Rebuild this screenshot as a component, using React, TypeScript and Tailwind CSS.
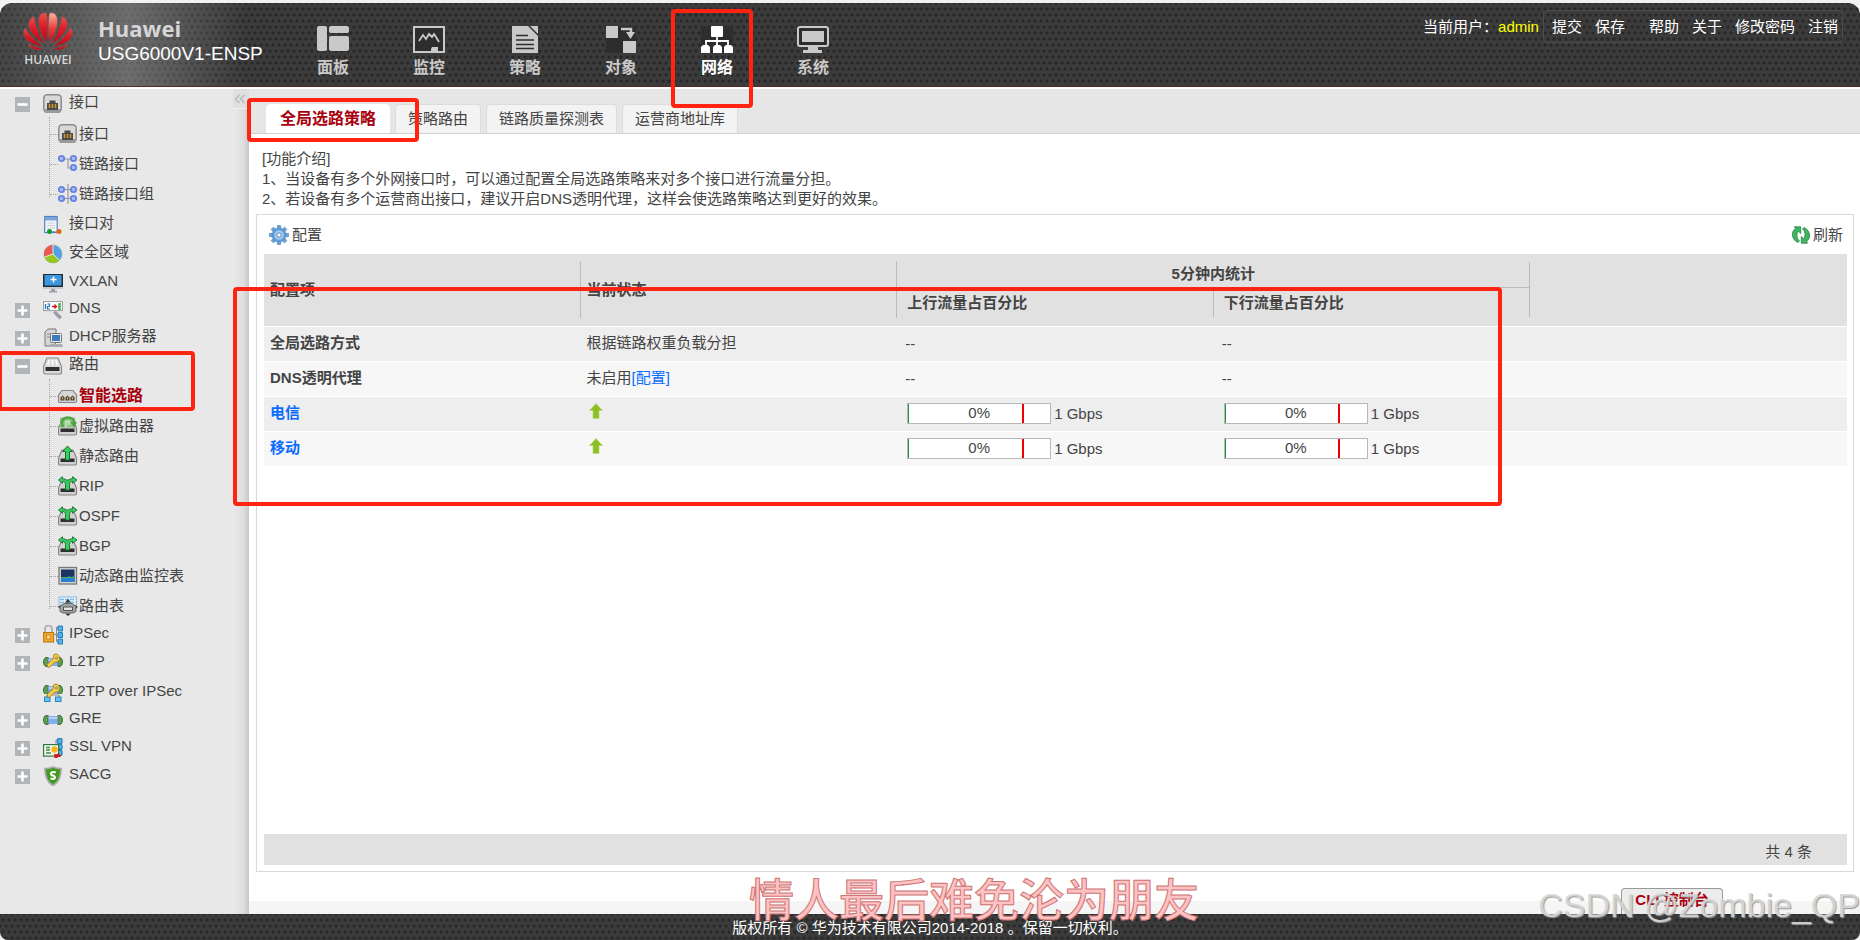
import type { ReactNode } from 'react'

type MenuItem = {
  label: string
  icon: ReactNode
  toggle?: 'open' | 'closed'
  active?: boolean
  children?: MenuItem[]
}

const svg = (children: ReactNode) => (
  <svg viewBox="0 0 20 20" className="w-5 h-5 shrink-0" aria-hidden="true">{children}</svg>
)

/* Sidebar icons */
const PortIcon = () => svg(
  <>
    <rect x="0.8" y="0.8" width="17.4" height="17.4" rx="3.5" fill="#d9d9d9" stroke="#8b8b8b" strokeWidth="1.5" />
    <path d="M1 15h17v1.500a2.500 2.500 0 0 1-2.500 2.500h-12A2.500 2.500 0 0 1 1 16.500z" fill="#9a9a9a" />
    <path d="M4 16V9h2.500V6.500h6V9H15v7z" fill="#4a4a4a" />
    <path d="M6.500 10v4M9.500 10v4M12.500 10v4" stroke="#d59a2b" strokeWidth="1.500" />
  </>
)

const LinkIcon = () => svg(
  <>
    <path d="M3 5h13M10 5v9h6" stroke="#999" strokeWidth="1.2" fill="none" />
    {[[3.500, 4.500], [15.500, 4.500], [15.500, 13.500]].map(([x, y]) => (
      <circle key={`${x}-${y}`} cx={x} cy={y} r="2.700" fill="#a9bcf5" stroke="#6683e0" strokeWidth="1.800" />
    ))}
  </>
)

const LinkGroupIcon = () => svg(
  <>
    <path d="M10 0v20M4 5.500h12M4 14.500h12" stroke="#999" strokeWidth="1.2" />
    {[[3.500, 5.500], [15.500, 5.500], [3.500, 14.500], [15.500, 14.500]].map(([x, y]) => (
      <circle key={`${x}-${y}`} cx={x} cy={y} r="2.700" fill="#a9bcf5" stroke="#6683e0" strokeWidth="1.800" />
    ))}
  </>
)

const PairIcon = () => svg(
  <>
    <rect x="1.700" y="1.500" width="12.500" height="16" fill="#f4f8fd" stroke="#5480c0" strokeWidth="1.200" />
    <path d="M2 2h12v3.500H2z" fill="#7da4dc" />
    <path d="M4 8h8M4 10.500h8M4 13h8" stroke="#c9cdd4" />
    <circle cx="6.500" cy="16.500" r="2.500" fill="#159a2a" />
    <circle cx="16" cy="16.500" r="2.500" fill="#e8650a" />
    <path d="M9.500 16.500h4" stroke="#5480c0" strokeDasharray="2 1" />
  </>
)

const ZoneIcon = () => svg(
  <>
    <circle cx="10" cy="10" r="9" fill="#4ea3e8" stroke="#999" strokeWidth="0.600" />
    <path d="M10 10V1a9 9 0 0 0-8.500 12z" fill="#ea5a4e" />
    <path d="M10 10l-8.500 3A9 9 0 0 0 16.500 16.300z" fill="#97c81e" />
    <path d="M10 1v9l6.500 6.300M10 10l-8.500 3" stroke="#fff" strokeWidth="0.800" fill="none" />
  </>
)

const VxlanIcon = () => svg(
  <>
    <rect x="0" y="1" width="20" height="13" fill="#1d2e3d" />
    <rect x="1.500" y="2" width="17" height="10.500" fill="#3d96dc" />
    <path d="M0 14h20v2H0z" fill="#c8ccd0" />
    <path d="M8 16h4v2h2v1.500H6V18h2z" fill="#9a9fa5" />
    <path d="M10.500 3.500v6M7.500 6.500h6" stroke="#fff" strokeWidth="1.500" />
  </>
)

const DnsIcon = () => svg(
  <>
    <rect x="0.600" y="1.600" width="18.800" height="9" fill="#fff" stroke="#999" />
    <path d="M2.500 4v5M4.500 4h2v2.500h-2V9h2.500" stroke="#1e78c8" fill="none" strokeWidth="1.200" />
    <path d="M9 6.500h4.500M11.500 4.500l2 2-2 2" stroke="#d11" strokeWidth="1.300" fill="none" />
    <path d="M18 4h-2v5h2M16 6.500h2" stroke="#2a9a2a" strokeWidth="1.300" fill="none" />
    <path d="M10 12l3-1 2 2 4 4-2.500 2.500-4-4z" fill="#9b9cae" />
  </>
)

const DhcpIcon = () => svg(
  <>
    <path d="M2 4l3-3h8v14l-3 3H2z" fill="#d4d6d8" stroke="#777" />
    <path d="M4 6h4M4 9h4" stroke="#888" />
    <rect x="7.500" y="5.500" width="11" height="9" rx="1" fill="#e8e8e8" stroke="#777" />
    <rect x="9" y="7" width="8" height="6" fill="#3e7dbd" />
    <path d="M7 16h12l1 3H6z" fill="#aaadb0" />
  </>
)

const RouterBase = () => (
  <>
    <path d="M4 4h11l3.500 8v5.500a1.500 1.500 0 0 1-1.500 1.500H2a1.500 1.500 0 0 1-1.500-1.500V12z" fill="#d2d2d2" stroke="#858585" strokeWidth="1.200" />
    <path d="M2.500 12.500h14v3.500h-14z" fill="#2f2f2f" />
  </>
)

const RouteIcon = () => svg(
  <>
    <path d="M4 2h11l3.500 8.500V16a2 2 0 0 1-2 2h-14a2 2 0 0 1-2-2v-5.500z" fill="#dcdcdc" stroke="#8a8a8a" strokeWidth="1.200" />
    <path d="M6 4L5 9M9.500 4v5M13 4l1 5" stroke="#fff" strokeWidth="1.500" />
    <path d="M2.500 11h14v4h-14z" fill="#2f2f2f" />
  </>
)

const SmartIcon = () => svg(
  <>
    <path d="M4 4.500h11L18.500 9v6a1.500 1.500 0 0 1-1.500 1.500H2A1.500 1.500 0 0 1 .5 15V9z" fill="#d6d6d6" stroke="#858585" strokeWidth="1.200" />
    {[4.500, 9.500, 14.500].map(x => (
      <g key={x}>
        <path d={`M${x - 2} 14.500v-3l2-2 2 2v3z`} fill="#4a4335" />
        <path d={`M${x} 11v2.500`} stroke="#d8b04a" strokeWidth="1.200" />
      </g>
    ))}
  </>
)

const VirtualIcon = () => svg(
  <>
    <RouterBase />
    <path d="M2 1.500h15v10H2z" fill="#8fc487" />
    <path d="M5 11C2 4 6 1.500 9.500 1.500S16 3 16.500 7" stroke="#4fa343" strokeWidth="2.600" fill="none" />
    <path d="M12.500 6h6.500l-3 5.500z" fill="#4fa343" />
    <path d="M8 11V5.500h3v3.500" stroke="#c8e8c2" strokeWidth="1.500" fill="none" />
  </>
)

const StaticIcon = () => svg(
  <>
    <RouterBase />
    <path d="M9.500 0l5 5.500h-3V14h-4V5.500h-3z" fill="#35cf5d" stroke="#1a6b30" strokeWidth="1" />
  </>
)

const DynamicIcon = () => svg(
  <>
    <RouterBase />
    <path d="M0.500 4L4.500 0.700v2c2 0 3.500.8 5 2 1.500-1.200 3-2 5-2v-2L19 4l-4.500 3.300v-2c-2 .2-3 1-3 3V14h-4V8.300c0-2-1-2.800-3-3v2z" fill="#35cf5d" stroke="#1a6b30" strokeWidth="0.900" />
  </>
)

const MonitorTableIcon = () => svg(
  <>
    <rect x="1" y="1.500" width="17.500" height="16.500" fill="#d5d5d5" stroke="#777" strokeWidth="1.300" />
    <rect x="3" y="3.500" width="13.500" height="12.500" fill="#1c3461" />
    <path d="M3 12l3-1 2 1 3-2 2 1 3.500-1V16H3z" fill="#2b7fd0" />
    <path d="M3 11.500h13.500" stroke="#46b04a" />
  </>
)

const RouteTableIcon = () => svg(
  <>
    <rect x="1" y="1" width="17.500" height="11" fill="#e8f4fb" stroke="#8abbe0" />
    <path d="M2 3.500h15.500M2 6.500h15.500" stroke="#7eb6de" strokeWidth="1.500" strokeDasharray="4 1" />
    <path d="M10 3l3 3.500H7zM10 20l3-2.500H7zM0 11l3.500-2.500v5zM20 11l-3.500-2.500v5z" fill="#333" />
    <path d="M6 7.500h8l4 3v5l-3 1.500H5l-3-1.500v-5z" fill="#a2a5a8" stroke="#666" />
    <rect x="5.500" y="11" width="9" height="3.500" fill="#e4e4e4" stroke="#555" />
  </>
)

const IpsecIcon = () => svg(
  <>
    <path d="M2 8V4a3.500 3.500 0 0 1 7 0v4" fill="none" stroke="#b4b4b4" strokeWidth="2" />
    <rect x="0.600" y="7.500" width="10" height="9.500" fill="#f2a92c" stroke="#b87510" />
    <rect x="3.500" y="10" width="4" height="4" fill="#fbd98a" stroke="#b87510" strokeWidth="0.700" />
    <path d="M11 9.500h2.500M16 2.500h-2.500v14H16" stroke="#888" fill="none" />
    {[1, 7.500, 14].map(y => (
      <rect key={y} x="15" y={y} width="4.500" height="5" rx="1" fill="#58b4e8" stroke="#1f7fc0" strokeWidth="1.200" />
    ))}
  </>
)

const Pipe = ({ y = 5 }: { y?: number }) => (
  <g transform={`translate(0 ${y})`}>
    <path d="M3 0.500C-0.300 1.500-0.300 8.500 3 9.500h2v-9z" fill="#57a24c" stroke="#2f6e2a" />
    <path d="M17 0.500c3.300 1 3.300 8 0 9h-2v-9z" fill="#57a24c" stroke="#2f6e2a" />
    <rect x="5" y="1" width="10" height="8" fill="#7fb2ec" />
    <path d="M5 3h10" stroke="#c3dcf8" strokeWidth="1.500" />
    <path d="M4.800 0v10M15.200 0v10" stroke="#777" strokeWidth="1.300" />
  </g>
)

const KeyShape = () => (
  <path d="M11 1.500a4 4 0 1 1 3 7.500l-2.500.3-5 5-2-.3-.5-2.500 6-5.500zM13.500 3.800a1.200 1.200 0 1 0 .1 0z" fill="#f6cf4a" stroke="#a87b13" strokeWidth="0.900" />
)

const L2tpIcon = () => svg(<><Pipe y={4} /><KeyShape /></>)

const L2tpIpsecIcon = () => svg(
  <>
    <Pipe y={2} />
    <rect x="0" y="11" width="20" height="8" fill="#e8e8e8" />
    <path d="M4 15v-3h12v3" stroke="#888" fill="none" />
    <rect x="1.500" y="14" width="5.500" height="4.500" fill="#6fc0ee" stroke="#1f86c8" />
    <rect x="12.500" y="14" width="5.500" height="4.500" fill="#6fc0ee" stroke="#1f86c8" />
    <KeyShape />
  </>
)

const GreIcon = () => svg(<Pipe />)

const SslIcon = () => svg(
  <>
    <path d="M16 2h-3v4" stroke="#888" fill="none" />
    {[0.700, 6.500, 12.500].map(y => (
      <rect key={y} x="14.500" y={y} width="4.500" height="4.800" rx="1" fill="#58b4e8" stroke="#1f7fc0" strokeWidth="1.200" />
    ))}
    <rect x="0.600" y="6.600" width="15" height="11.500" fill="#f4faf0" stroke="#2d7a3d" strokeWidth="1.200" />
    <path d="M3 9.500h4M3 12h4M3 15h5" stroke="#3f8a4c" strokeWidth="1.300" />
    <circle cx="11.500" cy="11.500" r="3.200" fill="#f8b51e" />
    <path d="M11 15.500l2 1 2.500-1.500v1.500h2v2.500h-3V20h-3z" fill="#d8161a" />
  </>
)

const SacgIcon = () => svg(
  <>
    <path d="M10 1c2.500 1.200 5 1.700 8 1.700 0 8-2 13.300-8 16.800C4 16 2 10.700 2 2.700c3 0 5.500-.5 8-1.700z" fill="#3f9a1e" stroke="#a9a9a9" strokeWidth="1.800" />
    <path d="M12.800 6.500c-5-1.500-6.500 2-3 3s3 4.500-2.300 3" stroke="#fff" strokeWidth="2" fill="none" />
  </>
)

const menu: MenuItem[] = [
  {
    label: '接口', icon: <PortIcon />, toggle: 'open',
    children: [
      { label: '接口', icon: <PortIcon /> },
      { label: '链路接口', icon: <LinkIcon /> },
      { label: '链路接口组', icon: <LinkGroupIcon /> },
    ],
  },
  { label: '接口对', icon: <PairIcon /> },
  { label: '安全区域', icon: <ZoneIcon /> },
  { label: 'VXLAN', icon: <VxlanIcon /> },
  { label: 'DNS', icon: <DnsIcon />, toggle: 'closed' },
  { label: 'DHCP服务器', icon: <DhcpIcon />, toggle: 'closed' },
  {
    label: '路由', icon: <RouteIcon />, toggle: 'open',
    children: [
      { label: '智能选路', icon: <SmartIcon />, active: true },
      { label: '虚拟路由器', icon: <VirtualIcon /> },
      { label: '静态路由', icon: <StaticIcon /> },
      { label: 'RIP', icon: <DynamicIcon /> },
      { label: 'OSPF', icon: <DynamicIcon /> },
      { label: 'BGP', icon: <DynamicIcon /> },
      { label: '动态路由监控表', icon: <MonitorTableIcon /> },
      { label: '路由表', icon: <RouteTableIcon /> },
    ],
  },
  { label: 'IPSec', icon: <IpsecIcon />, toggle: 'closed' },
  { label: 'L2TP', icon: <L2tpIcon />, toggle: 'closed' },
  { label: 'L2TP over IPSec', icon: <L2tpIpsecIcon /> },
  { label: 'GRE', icon: <GreIcon />, toggle: 'closed' },
  { label: 'SSL VPN', icon: <SslIcon />, toggle: 'closed' },
  { label: 'SACG', icon: <SacgIcon />, toggle: 'closed' },
]

/* Top navigation icons, drawn in currentColor */
const navItems = [
  {
    label: '面板',
    icon: (
      <>
        <rect x="0" y="0" width="10" height="25" rx="2" />
        <rect x="12" y="0" width="20" height="7" rx="2" />
        <rect x="12" y="10" width="20" height="15" rx="2" />
      </>
    ),
  },
  {
    label: '监控',
    icon: (
      <>
        <rect x="1" y="1" width="30" height="25" fill="#2d2d2d" stroke="currentColor" strokeWidth="2" />
        <path d="M6 15l4-6 3 4 3-5 3 3 2-3 2 3 3 5" fill="none" stroke="currentColor" strokeWidth="1.800" />
        <path d="M18 25v-2l1-2h6v4z" />
      </>
    ),
  },
  {
    label: '策略',
    icon: (
      <>
        <path d="M3 0h26v27H3z" fill="#2d2d2d" />
        <path d="M3 0h16l10 10v17H3z" />
        <path d="M21 0h8v8z" />
        <path d="M7 9.500h12M7 14h18M7 18.500h18M7 22.500h18" stroke="#2d2d2d" strokeWidth="1.500" />
      </>
    ),
  },
  {
    label: '对象',
    icon: (
      <>
        <path d="M1 0h30v27H1z" fill="#2d2d2d" />
        <path d="M1 0h12v12H1zM18 15h13v12H18z" />
        <path d="M16 3h10v5" fill="none" stroke="currentColor" strokeWidth="2.500" />
        <path d="M21 6h9l-4.500 7z" />
      </>
    ),
  },
  {
    label: '网络', active: true,
    icon: (
      <>
        <path d="M0 0h32v27H0z" fill="#2d2d2d" />
        <rect x="10" y="0" width="12" height="11" rx="1" />
        <path d="M16 11v9M5 20v-5h22v5" fill="none" stroke="currentColor" strokeWidth="1.800" />
        <path d="M0 21l2-2h5l2 2v6H0zM12 21l2-2h5l2 2v6h-9zM23 21l2-2h5l2 2v6h-9z" />
      </>
    ),
  },
  {
    label: '系统',
    icon: (
      <>
        <rect x="1" y="1" width="30" height="19" rx="2" fill="#2d2d2d" stroke="currentColor" strokeWidth="2" />
        <rect x="5" y="5" width="22" height="11" />
        <path d="M11 21h10v3h4v3H6v-3h5z" />
      </>
    ),
  },
]

const tabs = ['全局选路策略', '策略路由', '链路质量探测表', '运营商地址库']
const accountLinks = ['帮助', '关于', '修改密码', '注销']

/* Perforated dark metal used by the top bar and the footer */
const metal =
  'bg-[#3b3b3c] bg-[image:radial-gradient(circle,#272727_1px,transparent_2px),radial-gradient(circle,#272727_1px,transparent_2px)] bg-[size:6px_12px] bg-[position:0_0,3px_6px]'

const Marker = ({ className }: { className: string }) => (
  <div aria-hidden="true" className={`absolute z-20 border-4 border-[#ff2412] rounded-sm pointer-events-none ${className}`} />
)

/* Left half of the flower; the right half is its mirror image */
const petals = [
  'M23.800 31C16 20.500 13 8 17.500 2.300 19.300.4 23 .2 23.800 1.800c1.300 8 1.200 19 0 29.200z',
  'M22 32.500C11 25.500 3.500 17 6 9.500 6.800 7 8.800 5.200 11.200 4.200 12.500 15 17 24 22 32.500z',
  'M20.500 34.500C9 33.500.5 27.500.5 21c0-2.500.7-4.300 1.700-5.500C6 23 13 29.500 20.500 34.500z',
  'M20.500 36.300c-4.500 2.700-12.500 2.400-16-4.800 5.500 2.900 10.500 4.300 16 4.800z',
]

const Logo = () => (
  <svg viewBox="0 0 50 40" className="w-[50px] h-10" aria-hidden="true">
    <defs>
      <linearGradient id="petal" x1="0" y1="0" x2="0" y2="1">
        <stop offset="0" stopColor="#f0504a" />
        <stop offset="0.450" stopColor="#dc1c24" />
        <stop offset="1" stopColor="#b80a16" />
      </linearGradient>
      <linearGradient id="petalLit" x1="0" y1="0" x2="0" y2="1">
        <stop offset="0" stopColor="#ffb49c" />
        <stop offset="0.550" stopColor="#e8383a" />
        <stop offset="1" stopColor="#c0101a" />
      </linearGradient>
    </defs>
    <g stroke="#5c5c5c" strokeWidth="0.600">
      {petals.map(d => <path key={d} d={d} fill="url(#petal)" />)}
      <g transform="matrix(-1 0 0 1 50 0)">
        {petals.map((d, i) => <path key={d} d={d} fill={i === 0 ? 'url(#petalLit)' : 'url(#petal)'} />)}
      </g>
    </g>
  </svg>
)

const Header = () => (
  <header className={`relative z-10 flex h-[84px] rounded-t-xl border-b border-[#5a2a2a] ${metal}`}>
    <div className="flex w-[285px] rounded-tl-xl pl-[23px] pt-[9px] bg-[linear-gradient(to_right,rgba(160,160,160,0.1)_0%,rgba(160,160,160,0.5)_45%,transparent_86%)]">
      <div className="flex flex-col items-center w-[50px]">
        <Logo />
        <span className="font-['Open_Sans',sans-serif] font-semibold text-[12px] leading-4 text-[#d8d8d8]">HUAWEI</span>
      </div>
      <div className="pl-[25px] pt-0.5">
        <div className="font-['Open_Sans',sans-serif] font-bold text-[22px] leading-7 text-[#d6d6d6]">Huawei</div>
        <div className="text-[19px] leading-6 text-white whitespace-nowrap">USG6000V1-ENSP</div>
      </div>
    </div>

    <nav className="flex">
      {navItems.map(item => (
        <a key={item.label} href="#"
          className={`relative flex flex-col items-center w-24 pt-[23px] font-bold text-[16px] ${item.active ? 'text-white' : 'text-[#c9c9c9]'}`}>
          <svg viewBox="0 0 32 28" className="w-8 h-7 fill-current" aria-hidden="true">{item.icon}</svg>
          <span className="leading-7">{item.label}</span>
          {item.active && <Marker className="left-0.5 top-[6px] w-[82px] h-[99px]" />}
        </a>
      ))}
    </nav>

    <div className="ml-auto mr-[17px] mt-[7px] h-[33px] flex items-center text-[15px] text-white">
      <span>当前用户：</span>
      <span className="text-[#ffff00]">admin</span>
      <div className="ml-1 flex items-center h-full border border-[#4c4c4c] rounded-sm pl-2 pr-1">
        <div className="flex gap-[13px]">
          <button type="button">提交</button>
          <button type="button">保存</button>
        </div>
        <div className="flex gap-[13px] ml-6">
          {accountLinks.map(l => <a key={l} href="#">{l}</a>)}
        </div>
      </div>
    </div>
  </header>
)

const Toggle = ({ state, label }: { state: 'open' | 'closed'; label: string }) => (
  <button type="button" aria-label={label} className="block w-[15px] h-[15px] bg-[#b1b5b8]">
    <svg viewBox="0 0 15 15" className="w-[15px] h-[15px]" aria-hidden="true">
      <path d={state === 'open' ? 'M2.500 7.500h10' : 'M2.500 7.500h10M7.500 2.500v10'} stroke="#fff" strokeWidth="2.600" />
    </svg>
  </button>
)

const Sidebar = () => (
  <aside className="relative w-[249px] shrink-0 bg-[#e8e8e8] bg-[image:linear-gradient(to_right,transparent_94%,#e3e3e3_96%,#dcdcdc_98%,#c6c6c6_100%)]">
    <button type="button" aria-label="«" className="absolute right-0 top-0 w-4 h-5 bg-[#dfdfdf] border-b border-[#f4f4f4]">
      <svg viewBox="0 0 16 20" className="w-4 h-5" aria-hidden="true">
        <path d="M6.500 6L2.500 10l4 4M11.500 6l-4 4 4 4" stroke="#b9b9b9" strokeWidth="1.500" fill="none" />
      </svg>
    </button>
    <ul>
      {menu.map(item => (
        <li key={item.label} className="relative">
          <div className={`flex items-center pl-[15px] ${item.toggle ? 'h-7 pb-0.5' : 'h-[29px]'}`}>
            <div className="w-7 pt-1">{item.toggle && <Toggle state={item.toggle} label={item.label} />}</div>
            <div className="w-[26px] pt-1">{item.icon}</div>
            <a href="#">{item.label}</a>
          </div>
          {item.children && (
            <ul className="relative ml-[49px] pt-0.5 -mb-px border-l border-dotted border-[#a5a5a5] before:absolute before:-left-px before:bottom-0 before:h-3 before:w-px before:bg-[#e8e8e8]">
              {item.children.map(c => (
                <li key={c.label} className="flex items-center h-[30px]">
                  <span className="w-2 border-t border-dotted border-[#a5a5a5]" />
                  <span className="w-[21px]">{c.icon}</span>
                  <a href="#" className={c.active ? 'font-bold text-[16px] text-[#a8000e]' : ''}>{c.label}</a>
                </li>
              ))}
            </ul>
          )}
          {item.label === '路由' && <Marker className="-left-[2px] top-0 w-[197px] h-[60px]" />}
        </li>
      ))}
    </ul>
  </aside>
)

const GearIcon = () => (
  <svg viewBox="0 0 20 20" className="w-5 h-5" aria-hidden="true">
    <g fill="#6aa3d8">
      {[0, 45, 90, 135, 180, 225, 270, 315].map(a => (
        <path key={a} d="M8 4.500L8.500 0.500h3l.5 4z" transform={`rotate(${a} 10 10)`} stroke="#4079b4" strokeWidth="0.600" />
      ))}
      <circle cx="10" cy="10" r="6.600" stroke="#4b86c0" strokeWidth="0.800" />
    </g>
    <circle cx="10" cy="10" r="4.500" fill="#a9cdee" />
    <circle cx="10" cy="10" r="2.200" fill="#fff" stroke="#4b86c0" />
  </svg>
)

const RefreshIcon = () => (
  <svg viewBox="0 0 18 18" className="w-[18px] h-[18px]" aria-hidden="true">
    <g fill="#3fb562" stroke="#258645" strokeWidth="0.800">
      <path d="M6 16.500C-1.500 13-.5 4.500 3.500 2.800L2.500.8H8.700v6.700L6.700 5.300C4.500 7 4 12 7.500 15z" />
      <path d="M12 1.500c7.500 3.500 6.500 12 2.500 13.700l1 2H9.300v-6.700l2 2.200C13.500 11 14 6 10.500 3z" />
    </g>
  </svg>
)

const UpArrow = () => (
  <svg viewBox="0 0 14 16" className="w-[14px] h-4 ml-[2px] mb-1" role="img" aria-label="up">
    <path d="M7 0.500l6.500 7H10V15.500H4V7.500H.5z" fill="#8cbf26" stroke="#b5d96c" strokeWidth="0.800" />
  </svg>
)

const Usage = ({ percent }: { percent: number }) => (
  <div className="flex items-center gap-[3px] pl-[2px]">
    <div className="relative w-36 h-[21px] border border-[#b8b8b8] bg-white text-center leading-[18px]">
      <div className="absolute left-0 top-0 h-full min-w-px bg-[#1f9140]" style={{ width: `${percent}%` }} />
      {percent}%
      <div className="absolute left-4/5 top-0 h-full w-[2px] bg-[#f00000]" />
    </div>
    <span>1 Gbps</span>
  </div>
)

const rows = [
  { name: '全局选路方式', status: '根据链路权重负载分担' },
  { name: 'DNS透明代理', status: '未启用', config: true },
  { name: '电信', link: true },
  { name: '移动', link: true },
]

const PolicyTable = () => (
  <table className="w-full table-fixed border-collapse text-left">
    <thead className="bg-[#e1e1e1] text-[#444]">
      <tr className="h-[34px]">
        <th rowSpan={2} className="p-0">
          <div className="flex items-center h-[57px] pl-1.5 border-r border-[#bbb]">配置项</div>
        </th>
        <th rowSpan={2} className="p-0">
          <div className="flex items-center h-[57px] pl-1.5 border-r border-[#bbb]">当前状态</div>
        </th>
        <th colSpan={2} className="p-0 align-bottom">
          <div className="flex items-center justify-center h-[26px] pb-0.5 border-b border-r border-[#bbb]">5分钟内统计</div>
        </th>
        <th rowSpan={2} className="p-0"><span className="sr-only" /></th>
      </tr>
      <tr className="h-[38px]">
        <th className="p-0 align-top">
          <div className="flex items-center h-[29px] pl-[10px] border-r border-[#bbb]">上行流量占百分比</div>
        </th>
        <th className="p-0 align-top">
          <div className="flex items-center h-[29px] pl-[10px] border-r border-[#bbb]">下行流量占百分比</div>
        </th>
      </tr>
    </thead>
    <tbody>
      {rows.map(r => (
        <tr key={r.name} className="h-[35px] border-t border-white odd:bg-[#eee] even:bg-[#f7f7f7]">
          <td className="p-0 pl-1.5 pb-0.5 font-bold">
            {r.link ? <a href="#" className="text-[#0a6cff]">{r.name}</a> : r.name}
          </td>
          <td className="p-0 pl-1.5 pb-0.5">
            {r.link ? <UpArrow /> : r.status}
            {r.config && <a href="#" className="text-[#0a6cff]">[配置]</a>}
          </td>
          <td className="p-0 pl-2">{r.link ? <Usage percent={0} /> : '--'}</td>
          <td className="p-0 pl-2">{r.link ? <Usage percent={0} /> : '--'}</td>
          <td className="p-0" />
        </tr>
      ))}
    </tbody>
  </table>
)

const Content = () => (
  <main className="relative flex flex-col flex-1 min-w-0 bg-white">
    {/* Tabs */}
    <div className="relative flex items-end gap-[5px] h-[45px] pl-[17px] bg-[#e6e6e6] border-b border-[#d0d0d0]">
      {tabs.map((t, i) => (
        <button key={t} type="button"
          className={`h-[29px] rounded-t-sm border ${i === 0
            ? 'px-[13px] bg-white border-white text-[16px] font-bold text-[#a8000e]'
            : 'px-3 bg-[#f3f3f3] border-[#dcdcdc] border-b-0'}`}>
          {t}
        </button>
      ))}
      <Marker className="-left-[2px] top-[9px] w-[172px] h-[44px]" />
    </div>

    <div className="pl-[13px] pt-[15px] leading-5">
      <p>[功能介绍]</p>
      <p>1、当设备有多个外网接口时，可以通过配置全局选路策略来对多个接口进行流量分担。</p>
      <p>2、若设备有多个运营商出接口，建议开启DNS透明代理，这样会使选路策略达到更好的效果。</p>
    </div>

    {/* Panel */}
    <section className="relative flex flex-col flex-1 mt-[5px] ml-[7px] mr-[6px] pl-[7px] pr-[6px] pb-[6px] border border-[#d9d9d9]">
      <div className="flex items-center justify-between h-[39px] pl-[5px] pr-1">
        <button type="button" className="flex items-center gap-[3px]"><GearIcon />配置</button>
        <button type="button" className="flex items-center gap-[3px]"><RefreshIcon />刷新</button>
      </div>
      <PolicyTable />
      <div className="flex items-center justify-end h-[31px] mt-auto pr-[35px] pt-1 bg-[#e1e1e1]">共 4 条</div>
      <Marker className="-left-6 top-[72px] w-[79.5%] h-[219px]" />
    </section>

    <div className="flex items-end justify-end h-[42px] pr-[137px] bg-[linear-gradient(to_bottom,#fff_70%,#f5f5f5_70%)]">
      <button type="button"
        className="w-[102px] h-[26px] pb-1 border border-b-0 border-[#999] rounded-t bg-[#ececec] font-bold text-[#a8000e]">
        CLI 控制台
      </button>
    </div>
  </main>
)

export default function App() {
  return (
    <div className="relative flex flex-col min-h-screen overflow-hidden pt-[3px] bg-[#f2f2f2] font-['Liberation_Sans','Noto_Sans_CJK_SC',sans-serif] text-[15px] leading-5 text-[#444]">
      <Header />
      <div className="flex flex-1 border-t-2 border-white">
        <Sidebar />
        <Content />
      </div>
      <footer className={`h-[26px] text-center leading-7 text-white rounded-b-lg ${metal}`}>
        版权所有 © 华为技术有限公司2014-2018 。保留一切权利。
      </footer>

      {/* Overlays */}
      <div className="absolute z-20 left-[749px] bottom-[15px] text-[45px] leading-[46px] font-medium whitespace-nowrap text-[#ffc2c2] [-webkit-text-stroke:1px_#cc7474]">
        情人最后难免沦为朋友
      </div>
      <div className="absolute z-20 right-0 bottom-[15px] text-[34px] leading-10 whitespace-nowrap text-[#d8dada]/90 [text-shadow:1px_1px_1px_#999]">
        CSDN @Zombie_QP
      </div>
    </div>
  )
}
